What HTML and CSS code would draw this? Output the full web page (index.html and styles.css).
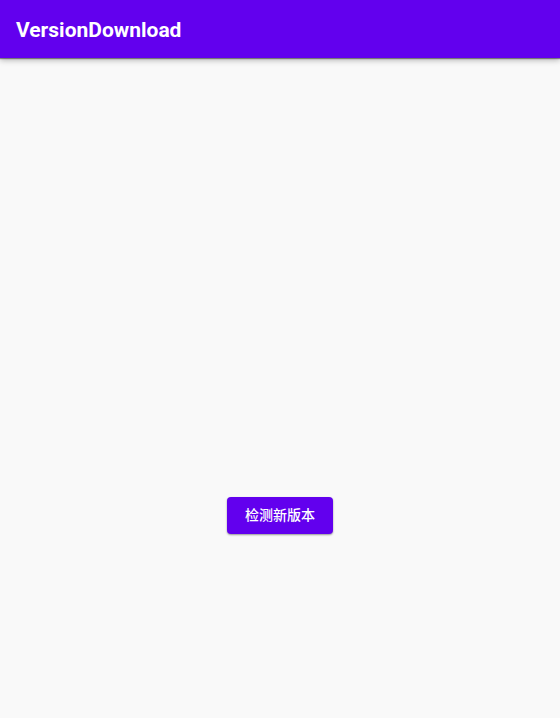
FILE: index.html
```html
<!DOCTYPE html>
<html lang="zh-CN">
<head>
<meta charset="utf-8">
<title>VersionDownload</title>
<link rel="stylesheet" href="styles.css">
</head>
<body>
<header class="app-bar"><h1 class="app-title">VersionDownload</h1></header>
<main class="content">
<button class="check-button" type="button">检测新版本</button>
</main>
</body>
</html>
```

FILE: styles.css
```css
* {
  box-sizing: border-box;
}

body {
  margin: 0;
  min-height: 100vh;
  display: flex;
  flex-direction: column;
  background: #f9f9f9;
  font-family: Roboto, "Noto Sans CJK SC", sans-serif;
}

.app-bar {
  padding: 17px 16px 15px;
  background: #6200ee;
  color: #fff;
  box-shadow: 0 1px 1px rgba(0, 0, 0, 0.4), 0 2px 6px rgba(0, 0, 0, 0.3);
}

.app-title {
  margin: 0;
  font-size: 21px;
  line-height: 26px;
  font-weight: 700;
}

.content {
  flex: 1;
  display: grid;
  grid-template-rows: 439fr 221fr;
  justify-items: center;
}

.check-button {
  grid-row: 2;
  align-self: start;
  padding: 8px 18px;
  border: 0;
  border-radius: 4px;
  background: #6200ee;
  color: #fff;
  font-family: inherit;
  font-size: 14px;
  line-height: 21px;
  font-weight: 500;
  box-shadow: 0 1px 2px rgba(0, 0, 0, 0.4);
}
```
